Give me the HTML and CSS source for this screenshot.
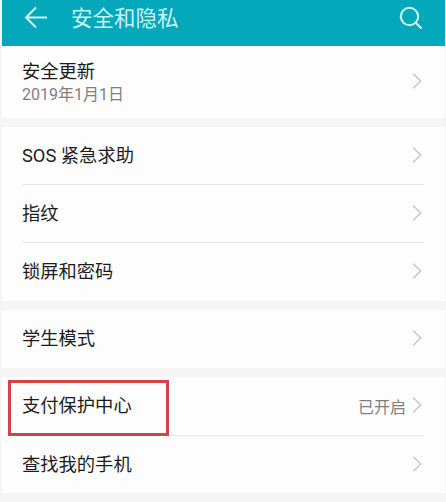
FILE: index.html
```html
<!DOCTYPE html>
<html lang="zh-CN">
<head>
<meta charset="utf-8">
<title>安全和隐私</title>
<link rel="stylesheet" href="styles.css">
</head>
<body>
<div class="screen">
  <header class="bar">
    <svg class="back" viewBox="0 0 24 23" width="24" height="23"><path d="M12 1.5 2 11.5l10 10M2 11.5h21"/></svg>
    <h1 class="title">安全和隐私</h1>
    <svg class="search" viewBox="0 0 24 24" width="24" height="24"><circle cx="10.5" cy="10.5" r="8.7"/><path d="m16.5 16.5 6 6"/></svg>
  </header>
  <section class="card">
    <div class="row tall">
      <div class="text"><div class="label">安全更新</div><div class="sub">2019年1月1日</div></div>
      <svg class="chev" viewBox="0 0 10 18" width="10" height="18"><path d="m1 1 8 8-8 8"/></svg>
    </div>
  </section>
  <section class="card">
    <div class="row"><div class="label">SOS 紧急求助</div><svg class="chev" viewBox="0 0 10 18" width="10" height="18"><path d="m1 1 8 8-8 8"/></svg></div>
    <div class="row"><div class="label">指纹</div><svg class="chev" viewBox="0 0 10 18" width="10" height="18"><path d="m1 1 8 8-8 8"/></svg></div>
    <div class="row"><div class="label">锁屏和密码</div><svg class="chev" viewBox="0 0 10 18" width="10" height="18"><path d="m1 1 8 8-8 8"/></svg></div>
  </section>
  <section class="card">
    <div class="row"><div class="label">学生模式</div><svg class="chev" viewBox="0 0 10 18" width="10" height="18"><path d="m1 1 8 8-8 8"/></svg></div>
  </section>
  <section class="card pay">
    <div class="row"><div class="label">支付保护中心</div><span class="value">已开启</span><svg class="chev" viewBox="0 0 10 18" width="10" height="18"><path d="m1 1 8 8-8 8"/></svg></div>
    <div class="row"><div class="label">查找我的手机</div><svg class="chev" viewBox="0 0 10 18" width="10" height="18"><path d="m1 1 8 8-8 8"/></svg></div>
    <span class="highlight"></span>
  </section>
</div>
</body>
</html>
```
FILE: styles.css
```css
* { box-sizing: border-box; }
html, body { margin: 0; padding: 0; }
body {
  width: 446px;
  height: 502px;
  overflow: hidden;
  background: #f5f5f5;
  font-family: "Roboto", "Noto Sans CJK SC", sans-serif;
}
.screen { display: flex; flex-direction: column; gap: 9px; padding: 0 1px 0 2px; }
.bar {
  height: 46px;
  margin-bottom: -9px;
  background: #04a8bb;
  display: flex;
  align-items: flex-start;
  padding: 6px 22px 0 22px;
  color: #c9f2f5;
}
.back path { fill: none; stroke: #d4f4f6; stroke-width: 2; }
.title {
  margin: -1px 0 0 23px;
  font-size: 21.5px;
  font-weight: 400;
  line-height: 28px;
  flex: 1;
}
.search circle, .search path { fill: none; stroke: #d4f4f6; stroke-width: 2; }
.card { background: #fdfdfd; position: relative; padding: 0 21px 0 20px; }
.row {
  height: 58px;
  display: flex;
  align-items: center;
  border-bottom: 1px solid #e6e6e6;
}
.row:last-of-type { border-bottom: 0; }
.tall { height: 72px; }
.pay .row:first-child { height: 59px; }
.pay .row:nth-child(2) { height: 57px; }
.text { flex: 1; }
.label { flex: 1; font-size: 18.3px; line-height: 24px; color: #1c1c1c; }
.sub { font-size: 16px; line-height: 21px; color: #808080; }
.value { font-size: 16px; color: #808080; margin-right: 6px; }
.chev { flex: none; margin: 0 2px 2px 0; transform: scale(0.92); }
.chev path { fill: none; stroke: #c4c4c4; stroke-width: 1.5; }
.highlight {
  position: absolute;
  left: 6px;
  top: 3px;
  width: 161px;
  height: 56px;
  border: 3px solid #d2444a;
}
```
